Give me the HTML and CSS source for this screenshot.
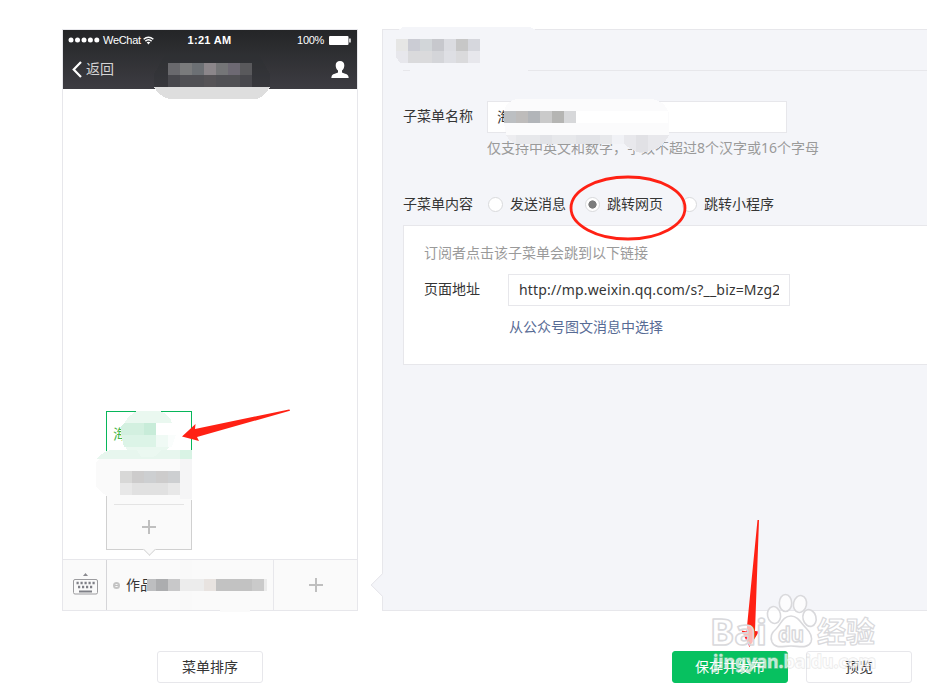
FILE: index.html
```html
<!DOCTYPE html>
<html lang="zh-CN">
<head>
    <meta charset="UTF-8">
    <meta name="viewport" content="width=device-width, initial-scale=1.0">
    <title>自定义菜单</title>
    <link rel="stylesheet" href="styles.css">
</head>
<body>
    <div class="page">
        <div class="main">
            <!-- 手机预览 -->
            <div class="phone">
                <div class="phone-head">
                    <div class="status">
                        <div class="carrier">
                            <svg width="32" height="8" viewBox="0 0 32 8" fill="#fff">
                                <circle cx="3" cy="4" r="2.5"/><circle cx="9.5" cy="4" r="2.5"/><circle cx="16" cy="4" r="2.5"/><circle cx="22.4" cy="4" r="2.5"/><circle cx="28.8" cy="4" r="2.5"/>
                            </svg>
                            <span class="carrier-name">WeChat</span>
                            <svg width="11" height="9" viewBox="0 0 12 9" fill="none" stroke="#fff" stroke-width="1.6">
                                <path d="M.7 3.2Q6-1.4 11.3 3.2M2.6 5.2Q6 2.3 9.4 5.2"/>
                                <path d="M4 6.5Q6 5 8 6.5L6 8.8z" fill="#fff" stroke="none"/>
                            </svg>
                        </div>
                        <span class="clock">1:21 AM</span>
                        <div class="battery">
                            <span>100%</span>
                            <svg width="22" height="9" viewBox="0 0 22 9" fill="#fff">
                                <rect width="19.5" height="9" rx="1"/><rect x="20.2" y="2.5" width="1.5" height="4"/>
                            </svg>
                        </div>
                    </div>
                    <div class="nav">
                        <div class="back">
                            <svg width="10" height="17" viewBox="0 0 10 17" fill="none" stroke="#fff" stroke-width="2.2">
                                <path d="M9 1L1.7 8.5 9 16"/>
                            </svg>
                            <span>返回</span>
                        </div>
                        <svg width="18" height="17" viewBox="0 0 18 17" fill="#fff">
                            <path d="M9 0C6.2 0 4.7 1.8 4.7 4.3c0 2.200.7 4 2.300 5.300v1.600C6.500 12.400 1.500 12.600.700 15L.3 17h17.400l-.4-2c-.8-2.400-5.800-2.600-6.300-3.800V9.600c1.600-1.300 2.300-3.100 2.300-5.300C13.300 1.800 11.800 0 9 0z"/>
                        </svg>
                    </div>
                </div>
                <div class="phone-body">
                    <div class="submenu">
                        <div class="submenu-item active">海</div>
                        <div class="submenu-item"></div>
                        <div class="submenu-add"><i class="plus"></i></div>
                    </div>
                </div>
                <div class="phone-menu">
                    <div class="keyboard">
                        <svg width="25" height="22" viewBox="0 0 25 22">
                            <path d="M10 3l2.500-3L15 3z" fill="#8a8a8f"/>
                            <rect x=".5" y="6.500" width="24" height="14.500" rx="1.500" fill="none" stroke="#9c9c9f"/>
                            <path d="M3.500 10h18.500M5 14h15" stroke="#7f8087" stroke-width="2.600" stroke-dasharray="2.200 1.800" fill="none"/>
                            <path d="M6 18.500h13" stroke="#7f8087" stroke-width="2"/>
                        </svg>
                    </div>
                    <div class="menu-item"><i class="dot"></i><span>作品</span></div>
                    <div class="menu-add"><i class="plus"></i></div>
                </div>
            </div>

            <!-- 菜单编辑 -->
            <div class="editor">
                <div class="editor-head"></div>
                <div class="row name-row">
                    <label class="label">子菜单名称</label>
                    <div class="field">
                        <div class="input name-input">海</div>
                        <p class="tips">仅支持中英文和数字，字数不超过8个汉字或16个字母</p>
                    </div>
                </div>
                <div class="row type-row">
                    <span class="label">子菜单内容</span>
                    <span class="radio"><i></i>发送消息</span>
                    <span class="radio checked"><i></i>跳转网页</span>
                    <span class="radio"><i></i>跳转小程序</span>
                </div>
                <div class="content">
                    <p class="content-tips">订阅者点击该子菜单会跳到以下链接</p>
                    <div class="url-row">
                        <label class="url-label">页面地址</label>
                        <div class="input url-input"><span>http://mp.weixin.qq.com/s?__biz=Mzg2</span></div>
                    </div>
                    <a class="link">从公众号图文消息中选择</a>
                </div>
            </div>
        </div>
        <div class="toolbar">
            <div class="btn sort">菜单排序</div>
            <div class="btn primary">保存并发布</div>
            <div class="btn preview">预览</div>
        </div>
    </div>

    <!-- 打码区域 -->
    <svg class="overlay" viewBox="0 0 927 694" shape-rendering="crispEdges">
        <path d="M166 53h92l12 21v13H154V74z" fill="#2f3034" opacity=".35"/>
        <path d="M154 87h116q-5 9-13 12h-88q-10-3-15-12z" fill="#dedede"/>
        <path d="M168 63h12v12h-12z" fill="#69696d"/>
        <path d="M180 63h12v12h-12z" fill="#7a7b7c"/>
        <path d="M192 63h12v12h-12z" fill="#6c7074"/>
        <path d="M204 63h12v12h-12z" fill="#8b868a"/>
        <path d="M216 63h12v12h-12z" fill="#747577"/>
        <path d="M228 63h12v12h-12z" fill="#6d6973"/>
        <path d="M240 63h12v12h-12z" fill="#59595c"/>
        <path d="M168 75h12v12h-12zM240 75h12v12h-12z" fill="#48484d"/>
        <path d="M180 75h24v12h-24zM216 75h24v12h-24z" fill="#505054"/>
        <path d="M204 75h12v12h-12z" fill="#555356"/>

        <path d="M403 27h127l6 3v32l-8 9H410l-14-14V32z" fill="#f4f5f9"/>
        <path d="M396 39h12v12h-12z" fill="#e6e6e5"/>
        <path d="M408 39h12v12h-12z" fill="#cbccd4"/>
        <path d="M420 39h12v12h-12z" fill="#d2d6d9"/>
        <path d="M432 39h12v12h-12z" fill="#c7c8cd"/>
        <path d="M444 39h12v12h-12z" fill="#dbdce1"/>
        <path d="M456 39h12v12h-12z" fill="#c7c7c7"/>
        <path d="M468 39h12v12h-12z" fill="#d6d7dd"/>
        <path d="M396 51h12v12h-8l-4-6zM468 51h12v12h-12z" fill="#e7e7ec"/>
        <path d="M408 51h24v12h-24zM456 51h12v12h-12z" fill="#dadadc"/>
        <path d="M432 51h12v12h-12z" fill="#d4d5d9"/>
        <path d="M444 51h12v12h-12z" fill="#dedfe4"/>

        <path d="M504 111q3-10 12-12h136q13 2 17 14v22H506l-2-12z" fill="#fbfbfc"/>
        <path d="M576 111h92v12h-92z" fill="#fff"/>
        <path d="M506 135h10v9q-7-3-10-9z" fill="#ededf0"/>
        <path d="M516 135h96v9h-96z" fill="#e7e8eb"/>
        <path d="M540 135h12v9h-12zM576 135h24v9h-24z" fill="#e2e3e7"/>
        <path d="M612 135h12v9h-12z" fill="#f1f2f6"/>
        <path d="M624 135h45q-6 13-16 15l-12 3q-12-3-17-10z" fill="#e8e8ec"/>
        <path d="M636 135h12v17h-12z" fill="#e1e1e5"/>
        <path d="M504 111h12v12h-12z" fill="#bcbfc2"/>
        <path d="M516 111h12v12h-12z" fill="#bebcbb"/>
        <path d="M528 111h12v12h-12z" fill="#b2b5b9"/>
        <path d="M540 111h12v12h-12z" fill="#cacaca"/>
        <path d="M552 111h12v12h-12z" fill="#b5b5b3"/>
        <path d="M564 111h12v12h-12z" fill="#d7d8da"/>

        <path d="M137 411h23q10 4 12 12h3v12q-4 16-17 21h-20q-15-5-17-21 1-16 16-24z" fill="#eaf8f0"/>
        <path d="M156 423h20v12h-20z" fill="#fff"/>
        <path d="M156 435h12v12h-12z" fill="#f0faf5"/>
        <path d="M168 435h8l-4 12h-4z" fill="#fafdfc"/>
        <path d="M121 427l3-4h20v12h-23z" fill="#d3f0e0"/>
        <path d="M144 423h12v12h-12z" fill="#c8ecd9"/>
        <path d="M121 435h35v12h-32z" fill="#dcf4e7"/>
        <path d="M97 459q5-7 14-9h81v9z" fill="#e7f6ee"/>
        <path d="M137 450h24q-3 5-8 7h-12z" fill="#ebf8f1"/>
        <path d="M180 450h12v9h-12z" fill="#d9f3e5"/>
        <path d="M96 462l4-3h92v41h-12l-2-2h-65q-10-2-17-12z" fill="#fafafa"/>
        <path d="M180 459h12v40h-12z" fill="#f5f5f6"/>
        <path d="M120 471h12v12h-12z" fill="#d8d8d7"/>
        <path d="M132 471h12v12h-12zM156 471h12v12h-12z" fill="#cdcccc"/>
        <path d="M144 471h12v12h-12zM168 471h12v12h-12z" fill="#cdcfd1"/>
        <path d="M120 483h12v12h-12zM168 483h12v12h-12z" fill="#e8e8e8"/>
        <path d="M132 483h36v12h-36z" fill="#e1e1e1"/>

        <path d="M180 560h12v50h-12z" fill="#f9f9f9"/>
        <path d="M220 610h30v2h-30z" fill="#fafafa"/>
        <path d="M147 579h9v12h-9z" fill="#bdbec0"/>
        <path d="M147 574h9v5h-9zM147 591h9v4h-9z" fill="#fafafa"/>
        <path d="M156 579h12v12h-12z" fill="#acadaf"/>
        <path d="M168 579h12v12h-12z" fill="#c8c8c9"/>
        <path d="M180 579h24v12h-24z" fill="#ececec"/>
        <path d="M204 579h12v12h-12z" fill="#e8e3e0"/>
        <path d="M216 579h36v12h-36z" fill="#c2c2c2"/>
        <path d="M252 579h12v12h-12z" fill="#cacaca"/>
        <path d="M264 579h3v12h-3z" fill="#ebebeb"/>
    </svg>

    <!-- 标注 -->
    <svg class="overlay" viewBox="0 0 927 694">
        <ellipse cx="628" cy="208" rx="57" ry="31" fill="none" stroke="#ff2114" stroke-width="2.800"/>
        <path d="M289 409.500q2 .5 0 1.500L197 437l2 4-17-4.500L195.500 424l-.5 5z" fill="#ff2114"/>
        <path d="M757.500 520h1.500L755 631l4 .5-9.500 15.500-8-16.500 5 1z" fill="#ff2114"/>
    </svg>

    <!-- 水印 -->
    <svg class="overlay" viewBox="0 0 927 694">
        <g class="mark">
            <text x="710" y="645" class="wm-bai" textLength="57" lengthAdjust="spacingAndGlyphs">Bai</text>
            <ellipse cx="774" cy="615" rx="6.500" ry="8.500" transform="rotate(-12 774 615)"/>
            <ellipse cx="785.500" cy="603" rx="6.200" ry="8.500"/>
            <ellipse cx="800" cy="604" rx="6.500" ry="8.500" transform="rotate(12 800 604)"/>
            <ellipse cx="809.500" cy="618" rx="6.500" ry="8.500" transform="rotate(-15 809.500 618)"/>
            <path d="M791 616c-8 0-10 8-15 13-5 4-6 8-4 13 3 7 11 4 19 4s17 3 20-4c2-6-1-10-5-14-5-5-8-12-15-12z"/>
            <text x="778" y="642" class="wm-du" textLength="26" lengthAdjust="spacingAndGlyphs">du</text>
            <text x="817" y="643" class="wm-cn">经验</text>
        </g>
        <text x="713" y="668" class="wm-url" textLength="163" lengthAdjust="spacingAndGlyphs">jingyan.baidu.com</text>
    </svg>
</body>
</html>
```
FILE: styles.css
```css
* {
    box-sizing: border-box;
}
body {
    margin: 0;
    background: #fff;
    color: #353535;
    font-family: "Noto Sans", "Noto Sans CJK SC", sans-serif;
    font-size: 14px;
    line-height: 20px;
    overflow: hidden;
}
p {
    margin: 0;
}
.page {
    position: relative;
    width: 927px;
    height: 694px;
    padding: 29px 0 0 62px;
}
.main {
    display: flex;
    gap: 24px;
    height: 582px;
}

/* 手机预览 */
.phone {
    display: flex;
    flex-direction: column;
    width: 296px;
    border: 1px solid #e7e7eb;
}
.phone-head {
    height: 59px;
    background: linear-gradient(#242527, #2e2f32 40%, #3d3c42);
    color: #fff;
    font-family: "Liberation Sans", "Noto Sans CJK SC", sans-serif;
}
.status {
    display: grid;
    grid-template-columns: 1fr auto 1fr;
    align-items: center;
    height: 20px;
    padding: 0 6px 0 5px;
    font-size: 11px;
    line-height: 14px;
}
.carrier,
.battery {
    display: flex;
    align-items: center;
    gap: 3px;
}
.carrier-name {
    width: 37px;
    letter-spacing: -0.3px;
}
.battery {
    justify-content: flex-end;
    gap: 5px;
    letter-spacing: -0.3px;
}
.clock {
    font-weight: bold;
    letter-spacing: 0.3px;
}
.nav {
    display: flex;
    align-items: center;
    justify-content: space-between;
    height: 38px;
    padding: 0 8px 0 9px;
}
.back {
    display: flex;
    align-items: center;
    gap: 4px;
    color: #d4d4d5;
}
.phone-body {
    position: relative;
    flex: 1;
}
.submenu {
    position: absolute;
    left: 43px;
    bottom: 9px;
    width: 86px;
    height: 139px;
    background: #fafafa;
    border: 1px solid #d0d0d0;
}
.submenu::after {
    content: "";
    position: absolute;
    left: 38px;
    bottom: -5px;
    width: 8px;
    height: 8px;
    background: #fafafa;
    border: solid #d9d9d9;
    border-width: 0 1px 1px 0;
    transform: rotate(45deg);
}
.submenu-item {
    height: 46px;
}
.submenu-item.active {
    margin: -1px -1px 0;
    padding: 12px 6px;
    background: #fff;
    border: 1px solid #07b65a;
    color: #44b549;
}
.submenu-add {
    display: flex;
    align-items: center;
    justify-content: center;
    height: 45px;
    margin: 1px 7px 0;
    border-top: 1px solid #e4e4e4;
}
.plus {
    width: 14px;
    height: 14px;
    background:
        linear-gradient(#bfbfbf, #bfbfbf) center / 14px 2px no-repeat,
        linear-gradient(#bfbfbf, #bfbfbf) center / 2px 14px no-repeat;
}
.phone-menu {
    display: flex;
    height: 51px;
    background: #fafafa;
    border-top: 1px solid #e7e7eb;
}
.keyboard {
    display: flex;
    align-items: center;
    justify-content: center;
    width: 44px;
    padding: 0 0 2px 2px;
    border-right: 1px solid #d5d5d8;
}
.menu-item {
    display: flex;
    align-items: center;
    gap: 6px;
    width: 167px;
    padding-left: 6px;
    border-right: 1px solid #e7e7eb;
}
.dot {
    width: 7px;
    height: 7px;
    border: 2px solid #c4c4c4;
    border-radius: 50%;
    background: linear-gradient(#bdbdbd, #bdbdbd) center / 5px 1px no-repeat;
}
.menu-add {
    display: flex;
    flex: 1;
    align-items: center;
    justify-content: center;
    padding-left: 1px;
}

/* 右侧编辑区 */
.editor {
    position: relative;
    flex: 1;
    padding-left: 20px;
    background: #f4f5f9;
    border: 1px solid #e7e7eb;
    border-right: 0;
}
.editor::before {
    content: "";
    position: absolute;
    left: -9px;
    bottom: 16px;
    width: 17px;
    height: 17px;
    background: #f4f5f9;
    border: solid #e7e7eb;
    border-width: 0 0 1px 1px;
    transform: rotate(45deg);
    clip-path: polygon(0 0, 100% 100%, 0 100%);
}
.editor-head {
    height: 41px;
    border-bottom: 1px solid #e7e7eb;
}
.row {
    display: flex;
}
.label {
    width: 84px;
}
.name-row {
    padding-top: 30px;
}
.name-row .label {
    padding-top: 5px;
}
.input {
    height: 32px;
    padding: 5px 10px;
    background: #fff;
    border: 1px solid #e7e7eb;
    white-space: nowrap;
}
.name-input {
    width: 300px;
    padding-left: 9px;
}
.tips {
    padding-top: 5px;
    color: #9a9a9a;
}
.type-row {
    align-items: center;
    padding-top: 36px;
}
.radio {
    display: flex;
    align-items: center;
    gap: 7.5px;
    margin-right: 19px;
}
.radio i {
    width: 15px;
    height: 15px;
    margin-left: 0.5px;
    background: #fff;
    border: 1px solid #d9dadc;
    border-radius: 50%;
}
.radio.checked {
    margin-right: 18px;
}
.radio.checked i {
    margin-left: -0.5px;
    background: radial-gradient(circle, #7c7c7c 3.8px, #fff 4.4px);
}
.content {
    height: 140px;
    margin-top: 11px;
    padding: 17px 20px;
    background: #fff;
    border: 1px solid #e7e7eb;
    border-right: 0;
}
.content-tips {
    color: #9a9a9a;
}
.url-row {
    display: flex;
    margin-top: 11px;
}
.url-label {
    width: 84px;
    padding-top: 5px;
}
.url-input {
    width: 282px;
}
.url-input span {
    display: block;
    overflow: hidden;
    letter-spacing: 0.17px;
}
.link {
    display: block;
    margin: 11px 0 0 85px;
    color: #576b95;
}

/* 底部按钮 */
.toolbar {
    display: flex;
    padding: 40px 0 0 95px;
}
.btn {
    width: 106px;
    height: 32px;
    border: 1px solid #e7e7eb;
    border-radius: 3px;
    line-height: 30px;
    text-align: center;
}
.btn.primary {
    width: 116px;
    margin: 0 18px 0 409px;
    background: #07c160;
    border-color: #07c160;
    color: #fff;
}

.overlay {
    position: absolute;
    left: 0;
    top: 0;
    width: 927px;
    height: 694px;
    pointer-events: none;
}
.mark {
    fill: #fff;
    fill-opacity: 0.7;
    stroke: #d9d9dc;
    stroke-width: 1.6px;
    stroke-linejoin: round;
}
.wm-bai,
.wm-du,
.wm-url {
    font-family: "Noto Sans", sans-serif;
    font-weight: bold;
}
.wm-bai {
    font-size: 36px;
}
.wm-du {
    font-size: 22px;
}
.wm-cn {
    font-family: "Noto Sans CJK SC", sans-serif;
    font-size: 29px;
    font-weight: bold;
    stroke-width: 1.2px;
}
.wm-url {
    font-size: 18px;
    fill: #fff;
    fill-opacity: 0.7;
    stroke: #cfcfcf;
    stroke-opacity: 0.45;
    stroke-width: 1.4px;
    paint-order: stroke;
}
```
